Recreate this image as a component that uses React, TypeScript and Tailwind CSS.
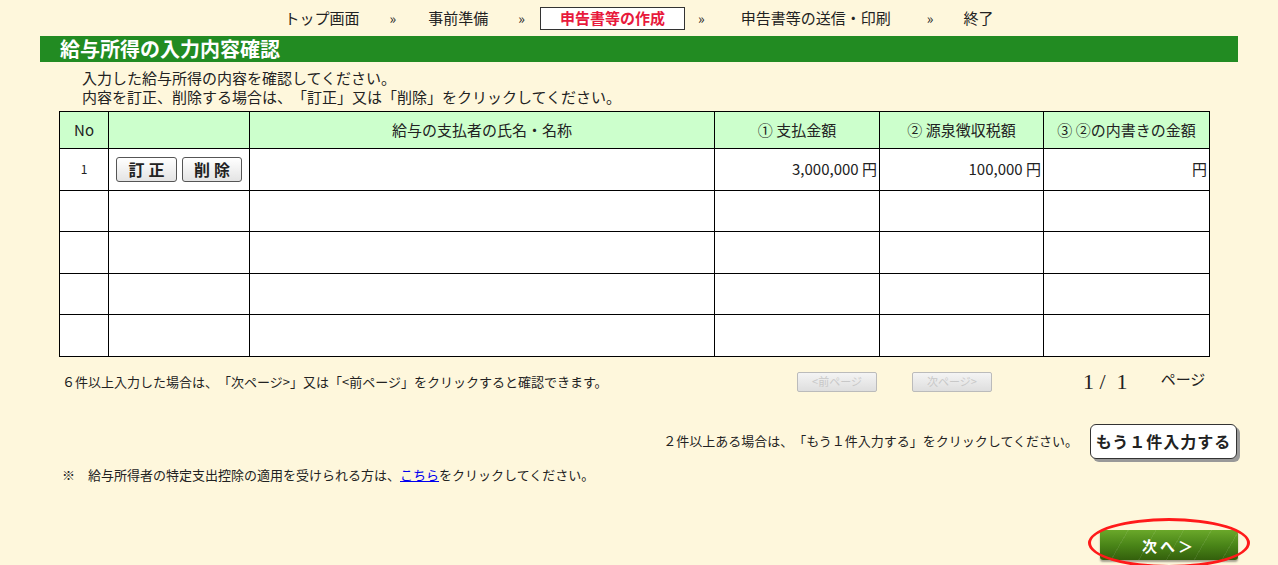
import React from "react";

const font = { fontFamily: '"Noto Sans CJK JP", "Noto Sans", sans-serif' };

function Sep() {
  return <span className="text-[14px] text-[#222]">»</span>;
}

export default function App() {
  const emptyRows = [0, 1, 2, 3];
  const td = "border-[1.5px] border-black";
  return (
    <div lang="ja" className="w-[1278px] h-[565px] bg-[#fef7dc] text-[#222] overflow-hidden [text-spacing-trim:space-all]" style={font}>
      {/* top nav */}
      <div className="h-[36px] flex items-center justify-center text-[15px]">
        <div className="flex items-center">
          <span>トップ画面</span>
          <span className="ml-[30px]"><Sep /></span>
          <span className="ml-[32px]">事前準備</span>
          <span className="ml-[30px]"><Sep /></span>
          <span className="ml-[15px] h-[23px] w-[145px] border border-[#333] bg-white flex items-center justify-center text-[#e8193c] font-bold">
            申告書等の作成
          </span>
          <span className="ml-[13px]"><Sep /></span>
          <span className="ml-[36px]">申告書等の送信・印刷</span>
          <span className="ml-[36px]"><Sep /></span>
          <span className="ml-[30px]">終了</span>
        </div>
      </div>

      <div className="ml-[40px] w-[1198px]">
        {/* title bar */}
        <div className="h-[26px] bg-[#228b22] flex items-center pl-[20px] text-white font-bold text-[20px] leading-none">
          給与所得の入力内容確認
        </div>

        {/* intro */}
        <div className="pl-[42px] pt-[6px] text-[15px] leading-[19px]">
          <div>入力した給与所得の内容を確認してください。</div>
          <div>内容を訂正、削除する場合は、「訂正」又は「削除」をクリックしてください。</div>
        </div>

        {/* table */}
        <table className="ml-[19px] mt-[5px] w-[1150px] border-collapse table-fixed">
          <colgroup>
            <col className="w-[49px]" />
            <col className="w-[141px]" />
            <col className="w-[465px]" />
            <col className="w-[165px]" />
            <col className="w-[164px]" />
            <col className="w-[166px]" />
          </colgroup>
          <thead>
            <tr className="h-[37px] bg-[#ccffcc] text-[15px]">
              <th className={`${td} font-normal`}>No</th>
              <th className={`${td} font-normal`}></th>
              <th className={`${td} font-normal`}>給与の支払者の氏名・名称</th>
              <th className={`${td} font-normal`}>① 支払金額</th>
              <th className={`${td} font-normal`}>② 源泉徴収税額</th>
              <th className={`${td} font-normal`}>③ ②の内書きの金額</th>
            </tr>
          </thead>
          <tbody className="bg-white">
            <tr className="h-[41.5px] text-[15px]">
              <td className={`${td} text-center text-[12px]`}>1</td>
              <td className={td}>
                <div className="flex items-center gap-[5px] pl-[7px]">
                  <button className="w-[61px] h-[25px] border-[1.5px] border-[#555] rounded-[3px] bg-gradient-to-b from-white to-[#e4e4e4] font-bold text-[16px] tracking-[4px] pl-[4px] leading-none">
                    訂正
                  </button>
                  <button className="w-[60px] h-[25px] border-[1.5px] border-[#555] rounded-[3px] bg-gradient-to-b from-white to-[#e4e4e4] font-bold text-[16px] tracking-[4px] pl-[4px] leading-none">
                    削除
                  </button>
                </div>
              </td>
              <td className={td}></td>
              <td className={`${td} text-right pr-[2px]`}>3,000,000 円</td>
              <td className={`${td} text-right pr-[2px]`}>100,000 円</td>
              <td className={`${td} text-right pr-[2px]`}>円</td>
            </tr>
            {emptyRows.map((r) => (
              <tr key={r} className="h-[41.5px]">
                <td className={td}></td>
                <td className={td}></td>
                <td className={td}></td>
                <td className={td}></td>
                <td className={td}></td>
                <td className={td}></td>
              </tr>
            ))}
          </tbody>
        </table>

        {/* pagination row */}
        <div className="mt-[14px] h-[22px] flex items-center pl-[22px] text-[13px]">
          <span className="w-[735px]">{"６件以上入力した場合は、「次ページ>」又は「<前ページ」をクリックすると確認できます。"}</span>
          <button className="w-[80px] h-[20px] border border-[#bbb] rounded-[2px] bg-gradient-to-b from-[#f4f4f4] to-[#dedede] text-[#c8c8c8] text-[11px] leading-none">
            {"<前ページ"}
          </button>
          <button className="ml-[35px] w-[80px] h-[20px] border border-[#bbb] rounded-[2px] bg-gradient-to-b from-[#f4f4f4] to-[#dedede] text-[#c8c8c8] text-[11px] leading-none">
            {"次ページ>"}
          </button>
          <span className="ml-[91px] text-[22px] leading-none whitespace-pre" style={{ fontFamily: '"Liberation Serif", "Noto Sans CJK JP", serif' }}>
            {"1 /  1"}
          </span>
          <span className="ml-[33px] text-[15px] -mt-[4px]">ページ</span>
        </div>

        {/* one more */}
        <div className="mt-[31px] flex items-center justify-end text-[13px]">
          <span className="mr-[12px]">２件以上ある場合は、「もう１件入力する」をクリックしてください。</span>
          <button className="w-[147px] h-[35px] border-[1.5px] border-[#333] rounded-[6px] bg-white shadow-[3px_3px_0_#999] font-bold text-[16px] tracking-[1px] leading-none mr-[1px]">
            もう１件入力する
          </button>
        </div>

        {/* note */}
        <div className="mt-[6px] pl-[22px] text-[13px]">
          <span>※　給与所得者の特定支出控除の適用を受けられる方は、</span>
          <a className="text-[#0000ee] underline cursor-pointer">こちら</a>
          <span>をクリックしてください。</span>
        </div>

        {/* next button */}
        <div className="mt-[46px] flex justify-end">
          <div className="relative">
            <button className="w-[138px] h-[30px] rounded-[3px] text-white font-bold text-[15px] tracking-[3px] leading-none shadow-[0_2px_2px_rgba(0,0,0,0.35)] bg-[repeating-linear-gradient(120deg,rgba(255,255,255,0.08)_0px,rgba(255,255,255,0.08)_1px,transparent_1px,transparent_24px),linear-gradient(to_bottom,#6aa82a,#4a8518_50%,#33600c)]">
              次へ＞
            </button>
            <div className="absolute left-[-12px] top-[-12px] w-[162px] h-[50px] rounded-[50%] border-[3px] border-[#ff1a1a] pointer-events-none" />
          </div>
        </div>
      </div>
    </div>
  );
}
